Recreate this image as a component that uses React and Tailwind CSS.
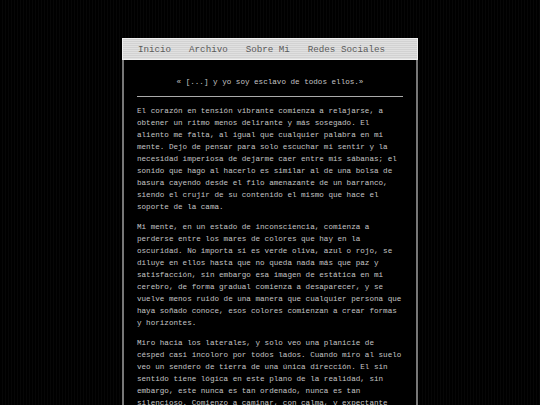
const paragraphs = [
  "El corazón en tensión vibrante comienza a relajarse, a obtener un ritmo menos delirante y más sosegado. El aliento me falta, al igual que cualquier palabra en mi mente. Dejo de pensar para solo escuchar mi sentir y la necesidad imperiosa de dejarme caer entre mis sábanas; el sonido que hago al hacerlo es similar al de una bolsa de basura cayendo desde el filo amenazante de un barranco, siendo el crujir de su contenido el mismo que hace el soporte de la cama.",
  "Mi mente, en un estado de inconsciencia, comienza a perderse entre los mares de colores que hay en la oscuridad. No importa si es verde oliva, azul o rojo, se diluye en ellos hasta que no queda nada más que paz y satisfacción, sin embargo esa imagen de estática en mi cerebro, de forma gradual comienza a desaparecer, y se vuelve menos ruido de una manera que cualquier persona que haya soñado conoce, esos colores comienzan a crear formas y horizontes.",
  "Miro hacia los laterales, y solo veo una planicie de césped casi incoloro por todos lados. Cuando miro al suelo veo un sendero de tierra de una única dirección. El sin sentido tiene lógica en este plano de la realidad, sin embargo, este nunca es tan ordenado, nunca es tan silencioso. Comienzo a caminar, con calma, y expectante ante lo que pueda encontrar en el camino.",
];

const links = ["Inicio", "Archivo", "Sobre Mi", "Redes Sociales"];

export default function App() {
  return (
    <div className="h-[405px] overflow-hidden bg-black bg-[repeating-linear-gradient(90deg,#000_0px,#000_2px,#070707_2px,#070707_3px)] font-['Liberation_Mono',monospace]">
      <div className="w-[296px] pt-[38px] ml-[122px]">
        {/* Nav */}
        <nav className="h-[22px] flex items-center gap-[18px] pl-[15px] pt-[2px] text-[9.2px] text-[#5a5a5a] border border-[#f0f0f0] bg-[#d6d6d6] bg-[repeating-linear-gradient(180deg,#d2d2d2_0px,#d2d2d2_1px,#e0e0e0_1px,#e0e0e0_2px)]">
          {links.map((l) => (
            <a key={l} className="leading-none whitespace-pre">
              {l}
            </a>
          ))}
        </nav>

        {/* Content */}
        <main className="border-x-2 border-[#777] bg-black px-[13px] pt-[16px] pb-10 text-[7.6px] leading-[12px] text-[#c4c4c4]">
          <p className="text-center">« [...] y yo soy esclavo de todos ellos.»</p>
          <hr className="mt-[8px] mb-[8px] border-0 h-px bg-[#aaa]" />
          <div className="space-y-[8px]">
            {paragraphs.map((p, i) => (
              <p key={i}>{p}</p>
            ))}
          </div>
        </main>
      </div>
    </div>
  );
}
